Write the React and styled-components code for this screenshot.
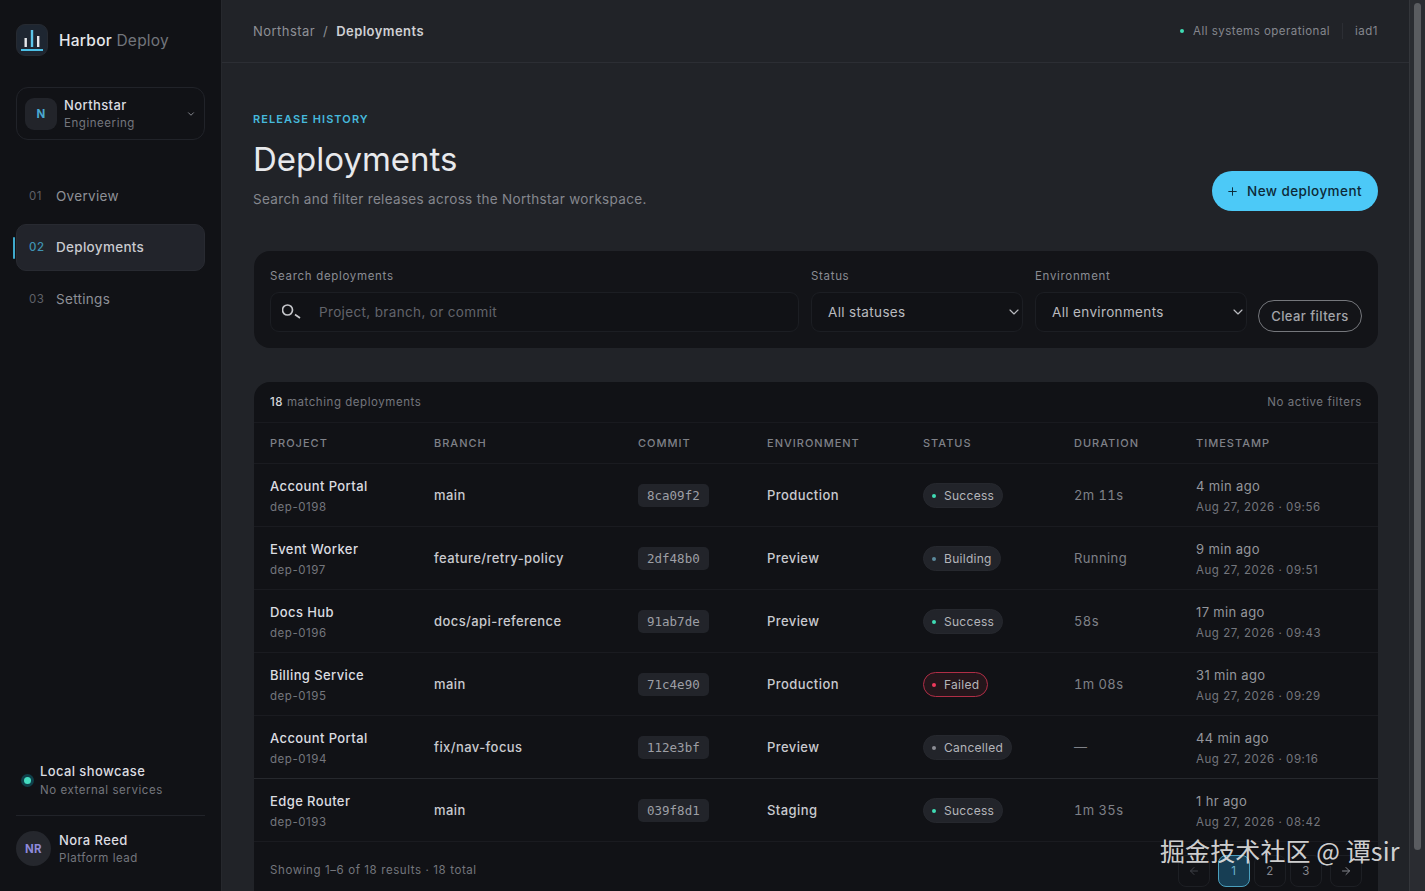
import React from 'react';
import styled, { createGlobalStyle } from 'styled-components';
import { ChevronDown, Plus, ArrowLeft, ArrowRight } from 'lucide-react';

const Global = createGlobalStyle`
  html, body { margin: 0; padding: 0; height: 100%; overflow: hidden; background: #212328; }
  * { box-sizing: border-box; }
  body { font-family: Inter, "Noto Sans", sans-serif; color: #e8e9ec; }
`;

const rows = [
  { name: 'Account Portal', id: 'dep-0198', branch: 'main', commit: '8ca09f2', env: 'Production', status: 'Success', duration: '2m 11s', ago: '4 min ago', at: 'Aug 27, 2026 · 09:56' },
  { name: 'Event Worker', id: 'dep-0197', branch: 'feature/retry-policy', commit: '2df48b0', env: 'Preview', status: 'Building', duration: 'Running', ago: '9 min ago', at: 'Aug 27, 2026 · 09:51' },
  { name: 'Docs Hub', id: 'dep-0196', branch: 'docs/api-reference', commit: '91ab7de', env: 'Preview', status: 'Success', duration: '58s', ago: '17 min ago', at: 'Aug 27, 2026 · 09:43' },
  { name: 'Billing Service', id: 'dep-0195', branch: 'main', commit: '71c4e90', env: 'Production', status: 'Failed', duration: '1m 08s', ago: '31 min ago', at: 'Aug 27, 2026 · 09:29' },
  { name: 'Account Portal', id: 'dep-0194', branch: 'fix/nav-focus', commit: '112e3bf', env: 'Preview', status: 'Cancelled', duration: '—', ago: '44 min ago', at: 'Aug 27, 2026 · 09:16' },
  { name: 'Edge Router', id: 'dep-0193', branch: 'main', commit: '039f8d1', env: 'Staging', status: 'Success', duration: '1m 35s', ago: '1 hr ago', at: 'Aug 27, 2026 · 08:42' },
];

const dotColours = { Success: '#3fdcb4', Building: '#5b8a9c', Failed: '#f0395c', Cancelled: '#8b8d94' };

const Shell = styled.div`
  display: flex;
  height: 891px;
  overflow: hidden;
  position: relative;
`;

const Sidebar = styled.aside`
  width: 222px;
  flex: none;
  display: flex;
  flex-direction: column;
  background: #111216;
  border-right: 1px solid #26282d;
  padding: 23px 16px 0 16px;
`;

const Brand = styled.div`
  display: flex;
  align-items: center;
  gap: 11px;
  height: 34px;
`;

const BrandMark = styled.div`
  width: 32px;
  height: 32px;
  border-radius: 9px;
  background: #1e2631;
  border: 1px solid #262a31;
  display: flex;
  align-items: center;
  justify-content: center;
`;

const BrandName = styled.div`
  font-size: 15.5px;
  font-weight: 500;
  letter-spacing: 0.25px;
  color: #e6e7ea;
  span { font-weight: 400; color: #72757c; }
`;

const Workspace = styled.div`
  margin-top: 30px;
  height: 53px;
  width: 189px;
  border: 1px solid #212329;
  border-radius: 12px;
  display: flex;
  align-items: center;
  padding: 0 8px;
  gap: 7px;
  color: #9a9ca3;
`;

const WorkspaceBadge = styled.div`
  width: 32px;
  height: 32px;
  border-radius: 9px;
  background: #22242a;
  color: #4aa8cf;
  font-size: 11.5px;
  font-weight: 700;
  display: flex;
  align-items: center;
  justify-content: center;
`;

const Stack = styled.div`
  flex: 1;
  display: flex;
  flex-direction: column;
  gap: ${p => p.$gap || 3}px;
  min-width: 0;
`;

const CellStack = styled(Stack)`
  gap: 6px;
  padding-top: 2px;
`;

const Strong = styled.div`
  font-size: 13px;
  font-weight: 500;
  letter-spacing: 0.4px;
  line-height: 16px;
  color: #dcdde1;
`;

const Faint = styled.div`
  font-size: 11.5px;
  letter-spacing: 0.55px;
  line-height: 15px;
  color: #74767d;
`;

const Nav = styled.nav`
  margin-top: 32px;
  display: flex;
  flex-direction: column;
  gap: 4.5px;
`;

const NavItem = styled.div`
  position: relative;
  width: 189px;
  height: 47px;
  display: flex;
  align-items: center;
  gap: 12px;
  padding: 0 12px;
  border-radius: 10px;
  font-size: 13.5px;
  letter-spacing: 0.3px;
  color: ${p => (p.$active ? '#c9cacf' : '#8e9096')};
  background: ${p => (p.$active ? '#22242b' : 'transparent')};
  border: 1px solid ${p => (p.$active ? '#282a31' : 'transparent')};
  font-weight: ${p => (p.$active ? 500 : 400)};
  &::before {
    content: ${p => (p.$active ? '""' : 'none')};
    position: absolute;
    left: -4px;
    top: 12px;
    width: 2px;
    height: 22px;
    background: #3fa9cc;
    border-radius: 2px;
  }
`;

const NavNum = styled.span`
  width: 15px;
  font-size: 11.5px;
  letter-spacing: 0.6px;
  color: ${p => (p.$active ? '#3f93b3' : '#5f6168')};
`;

const SideFoot = styled.div`
  margin-top: auto;
  padding-bottom: 25px;
  display: flex;
  flex-direction: column;
`;

const LocalNote = styled.div`
  display: flex;
  align-items: center;
  gap: 8px;
  padding: 0 0 17px 6px;
  border-bottom: 1px solid #212329;
`;

const LiveDot = styled.span`
  width: 7px;
  height: 7px;
  margin: 0 1px 0 2px;
  border-radius: 50%;
  background: #45dcc0;
  box-shadow: 0 0 0 3px #10404a;
`;

const User = styled.div`
  display: flex;
  align-items: center;
  gap: 8px;
  margin-top: 15px;
`;

const Avatar = styled.div`
  width: 35px;
  height: 35px;
  border-radius: 50%;
  background: #25272d;
  color: #8d89d9;
  font-size: 11.5px;
  font-weight: 700;
  letter-spacing: 0.3px;
  display: flex;
  align-items: center;
  justify-content: center;
`;

const Main = styled.main`
  flex: 1;
  min-width: 0;
  display: flex;
  flex-direction: column;
`;

const Topbar = styled.header`
  height: 63px;
  flex: none;
  border-bottom: 1px solid #2c2e34;
  display: flex;
  align-items: center;
  justify-content: space-between;
  padding: 0 31px;
  font-size: 13px;
  letter-spacing: 0.45px;
`;

const Crumbs = styled.div`
  display: flex;
  gap: 8px;
  color: #8e9096;
  b { color: #cfd0d4; font-weight: 600; }
`;

const TopStatus = styled.div`
  display: flex;
  align-items: center;
  font-size: 11.5px;
  letter-spacing: 0.48px;
  color: #85878e;
`;

const TinyDot = styled.span`
  width: 4px;
  height: 4px;
  border-radius: 50%;
  background: ${p => p.$colour};
  flex: none;
  margin-right: ${p => p.$gap || 0}px;
`;

const TopRegion = styled.span`
  margin-left: 12px;
  padding-left: 12px;
  border-left: 1px solid #2c2e34;
  line-height: 16px;
`;

const Content = styled.div`
  padding: 49px 31px 0 32px;
  display: flex;
  flex-direction: column;
`;

const PageHead = styled.div`
  display: flex;
  align-items: flex-end;
  justify-content: space-between;
  margin-left: -1px;
`;

const Eyebrow = styled.div`
  font-size: 11px;
  font-weight: 600;
  letter-spacing: 1.07px;
  color: #46b9dc;
  line-height: 14px;
`;

const Title = styled.h1`
  margin: 12px 0 0;
  font-size: 33px;
  font-weight: 400;
  line-height: 42px;
  color: #e8e9ec;
`;

const Lead = styled.p`
  margin: 10px 0 0;
  font-size: 13.5px;
  line-height: 18px;
  letter-spacing: 0.32px;
  color: #85878e;
`;

const PrimaryButton = styled.button`
  width: 166px;
  height: 40px;
  border: 0;
  border-radius: 20px;
  background: #4cc9f7;
  color: #0d2a38;
  font: 500 13.5px Inter, sans-serif;
  letter-spacing: 0.42px;
  display: flex;
  align-items: center;
  justify-content: center;
  gap: 8px;
  padding: 0 2px 0 0;
  margin-bottom: -3px;
`;

const Filters = styled.section`
  margin-top: 43px;
  height: 97px;
  border-radius: 16px;
  background: #131418;
  padding: 16px;
  display: grid;
  grid-template-columns: 1fr 212px 212px 103px;
  gap: 12px;
  align-items: end;
`;

const Field = styled.div`
  display: flex;
  flex-direction: column;
  gap: 8px;
`;

const FieldLabel = styled.div`
  font-size: 11.5px;
  line-height: 16px;
  letter-spacing: 0.68px;
  color: #8a8c93;
`;

const InputBox = styled.div`
  height: 40px;
  border: 1px solid #1c1e23;
  border-radius: 9px;
  background: #111216;
  display: flex;
  align-items: center;
  padding: 0 10px 0 11px;
  gap: 15px;
  font-size: 13.5px;
  letter-spacing: 0.35px;
  color: ${p => (p.$muted ? '#62646b' : '#b4b5ba')};
`;

const SelectBox = styled(InputBox)`
  justify-content: space-between;
  padding: 0 0 0 16px;
  color: #b9babf;
`;

const ClearButton = styled.button`
  height: 32px;
  width: 104px;
  margin-left: -1px;
  border: 1px solid #75777c;
  border-radius: 16px;
  background: transparent;
  color: #a3a5aa;
  font: 500 13px Inter, sans-serif;
  letter-spacing: 0.42px;
`;

const TablePanel = styled.section`
  margin-top: 34px;
  border-radius: 16px 16px 0 0;
  background: #111216;
`;

const Summary = styled.div`
  height: 41px;
  padding: 0 16px;
  display: flex;
  align-items: center;
  justify-content: space-between;
  border-bottom: 1px solid #191a1f;
  font-size: 11.5px;
  letter-spacing: 0.55px;
  color: #74767d;
  b { font-weight: 500; color: #d5d6da; }
`;

const Row = styled.div`
  display: grid;
  grid-template-columns: 164px 204px 129px 156px 151px 122px 1fr;
  align-items: center;
  padding: 0 16px;
  height: ${p => (p.$head ? '41px' : '63px')};
  border-bottom: 1px solid ${p => (p.$marked ? '#26282d' : '#1a1b20')};
`;

const HeadCell = styled.div`
  font-size: 11px;
  font-weight: 500;
  letter-spacing: 1px;
  color: #7f8188;
`;

const BodyCell = styled.div`
  font-size: 13px;
  font-weight: 500;
  letter-spacing: 0.42px;
  color: #c9cacf;
`;

const Duration = styled.div`
  font-size: 13px;
  letter-spacing: 0.4px;
  color: #7f8188;
  font-variant-numeric: tabular-nums;
`;

const Ago = styled.div`
  font-size: 13px;
  line-height: 16px;
  letter-spacing: 0.35px;
  color: #94969c;
`;

const Commit = styled.span`
  display: inline-block;
  height: 23px;
  padding: 0 9px;
  border-radius: 5px;
  background: #22242a;
  font: 12.5px/23px "DejaVu Sans Mono", "Liberation Mono", monospace;
  color: #9d9fa5;
`;

const Pill = styled.span`
  display: inline-flex;
  align-items: center;
  gap: 8px;
  height: 25px;
  padding: 0 8px;
  border-radius: 13px;
  background: ${p => (p.$status === 'Failed' ? '#24161b' : '#22242a')};
  border: 1px solid ${p => (p.$status === 'Failed' ? '#b02e46' : '#26282e')};
  font-size: 12px;
  letter-spacing: 0.28px;
  color: #b4b5ba;
`;

const Pager = styled.div`
  height: 55px;
  padding: 0 16px;
  display: flex;
  align-items: center;
  justify-content: space-between;
  font-size: 11.5px;
  letter-spacing: 0.6px;
  color: #74767d;
`;

const PagerButtons = styled.div`
  display: flex;
  gap: 8px;
  margin-top: 2px;
`;

const PageNumbers = styled.div`
  display: flex;
  gap: 4px;
`;

const PageButton = styled.div`
  width: 32px;
  height: 32px;
  border-radius: 8px;
  border: 1px solid ${p => (p.$active ? '#4a9fbd' : '#1d1f24')};
  background: ${p => (p.$active ? '#173e54' : 'transparent')};
  color: ${p => (p.$active ? '#6fb4cf' : p.$off ? '#3f4147' : '#85878e')};
  font-size: 11.5px;
  display: flex;
  align-items: center;
  justify-content: center;
`;

const Scrollbar = styled.div`
  width: 16px;
  flex: none;
  background: #2a2c31;
  border-left: 1px solid #34363b;
  padding: 3px 4px;
`;

const ScrollThumb = styled.div`
  height: 847px;
  border-radius: 4px;
  background: #5a5c60;
`;

const Watermark = styled.div`
  position: absolute;
  left: 1160px;
  top: 834px;
  font: 400 25px/32px "Noto Sans CJK SC", "Noto Sans", sans-serif;
  letter-spacing: 0.1px;
  color: rgba(232, 232, 232, 0.9);
  white-space: nowrap;
`;

const HarborMark = () => (
  <svg width="26" height="26" viewBox="0 0 26 26" fill="none">
    <rect x="5.5" y="11" width="2.4" height="9" fill="#e5e7ea" />
    <rect x="11.8" y="3" width="2.4" height="17" fill="#5cc6ea" />
    <rect x="18" y="9" width="2.4" height="11" fill="#e5e7ea" />
    <rect x="2" y="22" width="22" height="2" fill="#4cc0e6" />
  </svg>
);

const SearchGlyph = () => (
  <svg width="22" height="18" viewBox="0 0 22 18" fill="none" stroke="#c5c6ca">
    <circle cx="5.5" cy="7" r="5" strokeWidth="1.7" />
    <path d="M13 11.5l5 3.5" strokeWidth="1.7" />
  </svg>
);

const Deployment = ({ row, marked }) => (
  <Row $marked={marked}>
    <CellStack>
      <Strong>{row.name}</Strong>
      <Faint>{row.id}</Faint>
    </CellStack>
    <BodyCell>{row.branch}</BodyCell>
    <div><Commit>{row.commit}</Commit></div>
    <BodyCell>{row.env}</BodyCell>
    <div>
      <Pill $status={row.status}>
        <TinyDot $colour={dotColours[row.status]} />
        {row.status}
      </Pill>
    </div>
    <Duration>{row.duration}</Duration>
    <CellStack>
      <Ago>{row.ago}</Ago>
      <Faint>{row.at}</Faint>
    </CellStack>
  </Row>
);

export default function App() {
  return (
    <Shell>
      <Global />
      <Sidebar>
        <Brand>
          <BrandMark><HarborMark /></BrandMark>
          <BrandName>Harbor <span>Deploy</span></BrandName>
        </Brand>
        <Workspace>
          <WorkspaceBadge>N</WorkspaceBadge>
          <Stack>
            <Strong>Northstar</Strong>
            <Faint>Engineering</Faint>
          </Stack>
          <ChevronDown size={10} strokeWidth={2} />
        </Workspace>
        <Nav>
          <NavItem><NavNum>01</NavNum>Overview</NavItem>
          <NavItem $active><NavNum $active>02</NavNum>Deployments</NavItem>
          <NavItem><NavNum>03</NavNum>Settings</NavItem>
        </Nav>
        <SideFoot>
          <LocalNote>
            <LiveDot />
            <Stack $gap={4}>
              <Strong>Local showcase</Strong>
              <Faint>No external services</Faint>
            </Stack>
          </LocalNote>
          <User>
            <Avatar>NR</Avatar>
            <Stack>
              <Strong>Nora Reed</Strong>
              <Faint>Platform lead</Faint>
            </Stack>
          </User>
        </SideFoot>
      </Sidebar>
      <Main>
        <Topbar>
          <Crumbs>Northstar <span>/</span> <b>Deployments</b></Crumbs>
          <TopStatus>
            <TinyDot $colour="#3fdcb4" $gap={9} />
            All systems operational
            <TopRegion>iad1</TopRegion>
          </TopStatus>
        </Topbar>
        <Content>
          <PageHead>
            <div>
              <Eyebrow>RELEASE HISTORY</Eyebrow>
              <Title>Deployments</Title>
              <Lead>Search and filter releases across the Northstar workspace.</Lead>
            </div>
            <PrimaryButton><Plus size={13} strokeWidth={1.8} />New deployment</PrimaryButton>
          </PageHead>
          <Filters>
            <Field>
              <FieldLabel>Search deployments</FieldLabel>
              <InputBox $muted><SearchGlyph />Project, branch, or commit</InputBox>
            </Field>
            <Field>
              <FieldLabel>Status</FieldLabel>
              <SelectBox>All statuses<ChevronDown size={16} strokeWidth={1.75} /></SelectBox>
            </Field>
            <Field>
              <FieldLabel>Environment</FieldLabel>
              <SelectBox>All environments<ChevronDown size={16} strokeWidth={1.75} /></SelectBox>
            </Field>
            <ClearButton>Clear filters</ClearButton>
          </Filters>
          <TablePanel>
            <Summary>
              <span><b>18</b> matching deployments</span>
              <span>No active filters</span>
            </Summary>
            <Row $head>
              {['PROJECT', 'BRANCH', 'COMMIT', 'ENVIRONMENT', 'STATUS', 'DURATION', 'TIMESTAMP'].map(h => (
                <HeadCell key={h}>{h}</HeadCell>
              ))}
            </Row>
            {rows.map(row => <Deployment key={row.id} row={row} marked={row.id === 'dep-0194'} />)}
            <Pager>
              <span>Showing 1–6 of 18 results · 18 total</span>
              <PagerButtons>
                <PageButton $off><ArrowLeft size={12} /></PageButton>
                <PageNumbers>
                  <PageButton $active>1</PageButton>
                  <PageButton>2</PageButton>
                  <PageButton>3</PageButton>
                </PageNumbers>
                <PageButton><ArrowRight size={12} /></PageButton>
              </PagerButtons>
            </Pager>
          </TablePanel>
        </Content>
      </Main>
      <Scrollbar><ScrollThumb /></Scrollbar>
      <Watermark>掘金技术社区 @ 谭sir</Watermark>
    </Shell>
  );
}
